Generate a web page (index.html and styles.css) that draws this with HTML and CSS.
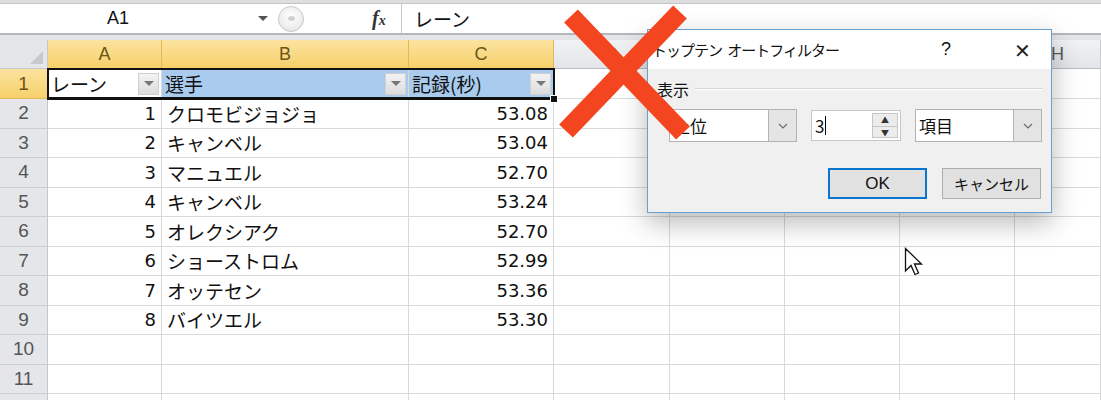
FILE: index.html
```html
<!DOCTYPE html>
<html lang="ja">
<head>
    <meta charset="UTF-8">
    <title>トップテン オートフィルター</title>
    <link rel="stylesheet" href="styles.css">
</head>
<body>
    <!-- Barre de formule -->
    <div class="formula-bar">
        <div class="name-box">
            <span class="name">A1</span>
            <span class="name-arrow"></span>
        </div>
        <div class="splitter"><span></span></div>
        <div class="fx">f<small>x</small></div>
        <div class="formula">レーン</div>
    </div>
    <div class="band"></div>

    <!-- Feuille -->
    <div class="sheet">
        <div class="corner"><span></span></div>
        <div class="col-head sel">A</div>
        <div class="col-head sel">B</div>
        <div class="col-head sel">C</div>
        <div class="col-head">D</div>
        <div class="col-head">E</div>
        <div class="col-head">F</div>
        <div class="col-head">G</div>
        <div class="col-head">H</div>

        <div class="row-head sel">1</div>
        <div class="cell head-cell active">レーン<span class="filter"></span></div>
        <div class="cell head-cell picked">選手<span class="filter"></span></div>
        <div class="cell head-cell picked">記録(秒)<span class="filter"></span></div>
        <div class="cell"></div><div class="cell"></div><div class="cell"></div><div class="cell"></div><div class="cell"></div>

        <div class="row-head">2</div>
        <div class="cell num">1</div><div class="cell jp">クロモビジョジョ</div><div class="cell num">53.08</div>
        <div class="cell"></div><div class="cell"></div><div class="cell"></div><div class="cell"></div><div class="cell"></div>

        <div class="row-head">3</div>
        <div class="cell num">2</div><div class="cell jp">キャンベル</div><div class="cell num">53.04</div>
        <div class="cell"></div><div class="cell"></div><div class="cell"></div><div class="cell"></div><div class="cell"></div>

        <div class="row-head">4</div>
        <div class="cell num">3</div><div class="cell jp">マニュエル</div><div class="cell num">52.70</div>
        <div class="cell"></div><div class="cell"></div><div class="cell"></div><div class="cell"></div><div class="cell"></div>

        <div class="row-head">5</div>
        <div class="cell num">4</div><div class="cell jp">キャンベル</div><div class="cell num">53.24</div>
        <div class="cell"></div><div class="cell"></div><div class="cell"></div><div class="cell"></div><div class="cell"></div>

        <div class="row-head">6</div>
        <div class="cell num">5</div><div class="cell jp">オレクシアク</div><div class="cell num">52.70</div>
        <div class="cell"></div><div class="cell"></div><div class="cell"></div><div class="cell"></div><div class="cell"></div>

        <div class="row-head">7</div>
        <div class="cell num">6</div><div class="cell jp">ショーストロム</div><div class="cell num">52.99</div>
        <div class="cell"></div><div class="cell"></div><div class="cell"></div><div class="cell"></div><div class="cell"></div>

        <div class="row-head">8</div>
        <div class="cell num">7</div><div class="cell jp">オッテセン</div><div class="cell num">53.36</div>
        <div class="cell"></div><div class="cell"></div><div class="cell"></div><div class="cell"></div><div class="cell"></div>

        <div class="row-head">9</div>
        <div class="cell num">8</div><div class="cell jp">バイツエル</div><div class="cell num">53.30</div>
        <div class="cell"></div><div class="cell"></div><div class="cell"></div><div class="cell"></div><div class="cell"></div>

        <div class="row-head">10</div>
        <div class="cell"></div><div class="cell"></div><div class="cell"></div>
        <div class="cell"></div><div class="cell"></div><div class="cell"></div><div class="cell"></div><div class="cell"></div>

        <div class="row-head">11</div>
        <div class="cell"></div><div class="cell"></div><div class="cell"></div>
        <div class="cell"></div><div class="cell"></div><div class="cell"></div><div class="cell"></div><div class="cell"></div>

        <div class="row-head">12</div>
        <div class="cell"></div><div class="cell"></div><div class="cell"></div>
        <div class="cell"></div><div class="cell"></div><div class="cell"></div><div class="cell"></div><div class="cell"></div>

        <!-- Sélection A1:C1 -->
        <div class="selection"><span class="handle"></span></div>
    </div>

    <!-- Boîte de dialogue -->
    <div class="dialog">
        <div class="dialog-title">
            <span class="title-text">トップテン&nbsp;オートフィルター</span>
            <span class="title-help">?</span>
            <span class="title-close">✕</span>
        </div>
        <div class="dialog-body">
            <div class="group-label"><span>表示</span><i></i></div>
            <div class="controls">
                <div class="combo combo-first"><span>上位</span><b class="drop"><svg width="10" height="6" viewBox="0 0 10 6"><path d="M1 1 L5 5 L9 1" fill="none" stroke="#6d6d6d" stroke-width="1.2"/></svg></b></div>
                <div class="spin"><span>3<i class="caret"></i></span><b class="spin-btns"><em>▲</em><em>▼</em></b></div>
                <div class="combo combo-last"><span>項目</span><b class="drop"><svg width="10" height="6" viewBox="0 0 10 6"><path d="M1 1 L5 5 L9 1" fill="none" stroke="#6d6d6d" stroke-width="1.2"/></svg></b></div>
            </div>
            <div class="buttons">
                <button class="btn btn-ok">OK</button>
                <button class="btn">キャンセル</button>
            </div>
        </div>
    </div>

    <!-- Croix rouge -->
    <svg class="red-x" width="140" height="145" viewBox="0 0 140 145">
        <line x1="16" y1="16" x2="128" y2="133" stroke="#f3451f" stroke-width="19"/>
        <line x1="125" y1="12" x2="11" y2="131" stroke="#f3451f" stroke-width="19"/>
    </svg>

    <!-- Pointeur -->
    <svg class="pointer" width="20" height="30" viewBox="0 0 20 30">
        <path d="M1.5 1.5 L1.5 24 L7 18.5 L11 27.5 L14.5 26 L10.5 17 L17.5 17 Z" fill="#fff" stroke="#111" stroke-width="1.3" stroke-linejoin="miter"/>
    </svg>
</body>
</html>
```

FILE: styles.css
```css
body {
    margin: 0;
    width: 1101px;
    height: 400px;
    overflow: hidden;
    position: relative;
    background-color: #dedede;
    font-family: "Liberation Sans", "Noto Sans CJK JP", sans-serif;
    color: #111;
}
.formula-bar {
    margin-top: 3px;
    height: 29px;
    display: flex;
    align-items: center;
    background-color: #fff;
    border-top: 1px solid #c4c4c4;
    border-bottom: 2px solid #b4b8bd;
}
.name-box {
    width: 272px;
    display: flex;
    align-items: center;
}
.name {
    width: 236px;
    text-align: center;
    font-size: 18px;
}
.name-arrow {
    margin-left: 22px;
    border-left: 5px solid transparent;
    border-right: 5px solid transparent;
    border-top: 5px solid #555;
}
.splitter {
    width: 24px;
    height: 24px;
    margin-left: 6px;
    border-radius: 50%;
    border: 1px solid #c9c9c9;
    background: radial-gradient(circle at 50% 40%, #fff 0, #eee 60%, #d9d9d9 100%);
    display: flex;
    align-items: center;
    justify-content: center;
}
.splitter span {
    width: 7px;
    height: 5px;
    border-radius: 50%;
    background-color: #d0d0d0;
}
.fx {
    margin-left: 68px;
    width: 29px;
    font-family: "Liberation Serif", serif;
    font-style: italic;
    font-weight: bold;
    font-size: 20px;
    color: #333;
}
.fx small {
    font-size: 14px;
}
.formula {
    align-self: stretch;
    display: flex;
    align-items: center;
    border-left: 1px solid #c8c8c8;
    padding-left: 12px;
    font-size: 19px;
    font-family: "Noto Sans CJK JP", sans-serif;
}
.band {
    height: 5px;
    background-color: #e4e5e7;
}
.sheet {
    position: relative;
    display: grid;
    grid-template-columns: 48px 114px 247px 145px 116px 115px 115px 115px 86px;
    grid-template-rows: 29px 30px;
    grid-auto-rows: 29.5px;
    background-color: #fff;
}
.sheet > div {
    box-sizing: border-box;
}
.corner {
    background-color: #e4e6e9;
    border-right: 1px solid #c5c8cc;
    border-bottom: 1px solid #c5c8cc;
    position: relative;
}
.corner span {
    position: absolute;
    right: 4px;
    bottom: 4px;
    border-left: 13px solid transparent;
    border-bottom: 13px solid #c6c8cb;
}
.col-head {
    display: flex;
    align-items: center;
    justify-content: center;
    background: linear-gradient(#f1f2f4, #e3e5e8);
    border-right: 1px solid #c9ccd0;
    border-bottom: 1px solid #b9bdc2;
    color: #5a5a5a;
    font-size: 18px;
}
.col-head.sel {
    background: linear-gradient(#fbe3a0, #f7d06a);
    border-right-color: #e2b75a;
    border-bottom-color: #d6a640;
    color: #6b5514;
}
.row-head {
    display: flex;
    align-items: center;
    justify-content: center;
    background-color: #e4e6e9;
    border-right: 1px solid #c5c8cc;
    border-bottom: 1px solid #c9ccd0;
    color: #555;
    font-size: 19px;
}
.row-head.sel {
    background: linear-gradient(#fbe3a0, #f7d06a);
    border-bottom-color: #e2b75a;
    border-right-color: #d6a640;
    color: #6b5514;
}
.cell {
    display: flex;
    align-items: center;
    border-right: 1px solid #d9d9d9;
    border-bottom: 1px solid #d9d9d9;
    font-size: 19px;
    white-space: nowrap;
    overflow: hidden;
}
.cell.num {
    justify-content: flex-end;
    padding-right: 5px;
    font-family: "DejaVu Sans", sans-serif;
    font-size: 18px;
}
.cell.jp {
    padding-left: 5px;
    font-family: "Noto Sans CJK JP", sans-serif;
}
.head-cell {
    justify-content: space-between;
    padding-left: 3px;
    padding-right: 2px;
    font-family: "Noto Sans CJK JP", sans-serif;
}
.head-cell.picked {
    background-color: #a9cbee;
}
.filter {
    width: 21px;
    height: 22px;
    box-sizing: border-box;
    background: linear-gradient(#f3f3f3, #dcdcdc);
    border: 1px solid #cfcfcf;
    display: flex;
    align-items: center;
    justify-content: center;
}
.filter::after {
    content: "";
    border-left: 5px solid transparent;
    border-right: 5px solid transparent;
    border-top: 5px solid #777;
}
.selection {
    position: absolute;
    left: 47px;
    top: 28px;
    width: 508px;
    height: 32px;
    box-sizing: border-box;
    border: 2px solid #111;
    border-bottom-width: 3px;
}
.handle {
    position: absolute;
    right: -5px;
    bottom: -6px;
    width: 6px;
    height: 6px;
    background-color: #111;
    border: 1px solid #fff;
}
.dialog {
    position: absolute;
    left: 647px;
    top: 29px;
    width: 405px;
    height: 184px;
    box-sizing: border-box;
    border: 1px solid #6b9fd2;
    background-color: #f0f0f0;
    box-shadow: 0 10px 26px rgba(0, 0, 0, 0.28);
    font-family: "Noto Sans CJK JP", sans-serif;
}
.dialog-title {
    height: 39px;
    display: flex;
    align-items: center;
    background-color: #fff;
    font-size: 15px;
}
.title-text {
    padding-left: 4px;
    letter-spacing: -1px;
    word-spacing: 3px;
    flex: 1;
}
.title-help {
    font-family: "Liberation Sans", sans-serif;
    font-size: 18px;
    width: 73px;
}
.title-close {
    font-size: 20px;
    width: 37px;
    font-weight: 300;
    color: #222;
}
.dialog-body {
    padding: 10px 9px 0 9px;
}
.group-label {
    display: flex;
    align-items: center;
    height: 20px;
    font-size: 16px;
}
.group-label i {
    flex: 1;
    margin-left: 6px;
    border-top: 1px solid #d5d5d5;
    border-bottom: 1px solid #fff;
}
.controls {
    display: flex;
    gap: 14px;
    margin: 10px 0 0 12px;
}
.combo, .spin {
    height: 33px;
    box-sizing: border-box;
    display: flex;
    align-items: stretch;
    background-color: #fff;
    border: 1px solid #b3b3b3;
    font-size: 17px;
}
.combo span, .spin span {
    flex: 1;
    display: flex;
    align-items: center;
    padding-left: 3px;
}
.combo-first {
    width: 128px;
}
.combo-last {
    width: 127px;
}
.drop {
    width: 27px;
    background-color: #e4e4e4;
    border-left: 1px solid #b3b3b3;
    display: flex;
    align-items: center;
    justify-content: center;
}
.spin {
    width: 90px;
    height: 31px;
    margin-top: 1px;
    border-color: #c6c6c6;
}
.caret {
    width: 1px;
    height: 19px;
    margin-left: 1px;
    background-color: #000;
}
.spin-btns {
    width: 24px;
    margin: 2px 2px 2px 0;
    display: flex;
    flex-direction: column;
    border: 1px solid #c6c6c6;
    background-color: #ececec;
}
.spin-btns em {
    flex: 1;
    font-style: normal;
    font-size: 8px;
    line-height: 12px;
    text-align: center;
    color: #333;
}
.spin-btns em + em {
    border-top: 1px solid #c6c6c6;
}
.buttons {
    display: flex;
    justify-content: flex-end;
    gap: 15px;
    margin-top: 26px;
    padding-right: 1px;
}
.btn {
    width: 99px;
    height: 31px;
    box-sizing: border-box;
    border: 1px solid #adadad;
    background-color: #e1e1e1;
    font-family: "Noto Sans CJK JP", sans-serif;
    font-size: 15px;
    color: #111;
    padding: 0;
}
.btn-ok {
    border: 2px solid #0a74cf;
    font-family: "Liberation Sans", sans-serif;
    font-size: 17px;
}
.red-x {
    position: absolute;
    left: 555px;
    top: 0;
}
.pointer {
    position: absolute;
    left: 904px;
    top: 247px;
}
```
